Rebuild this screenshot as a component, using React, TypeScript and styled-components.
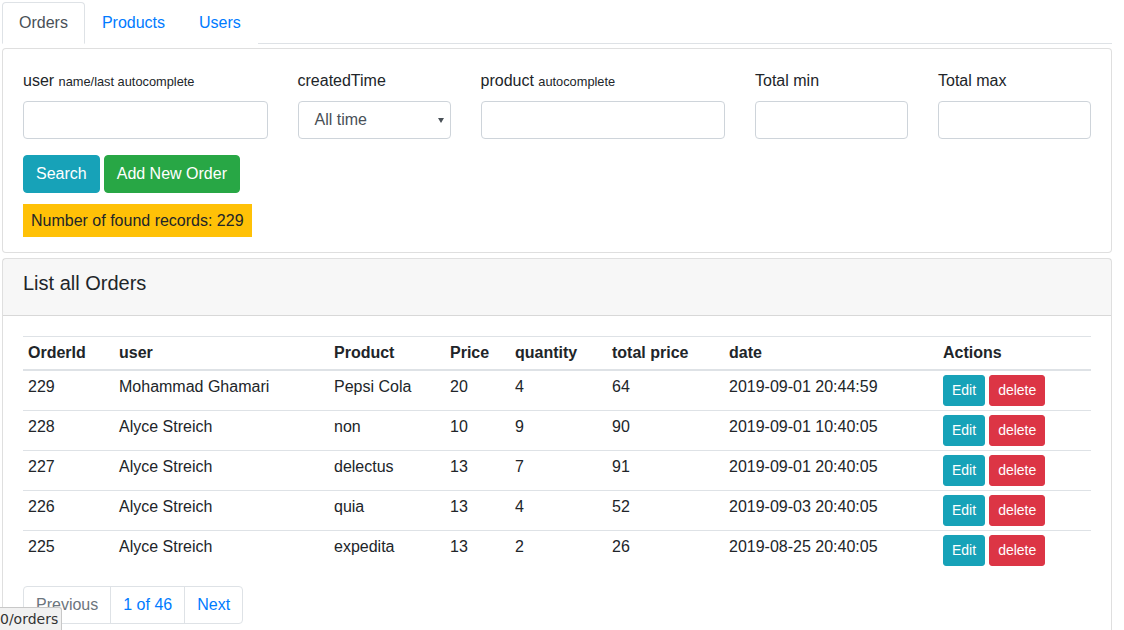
import styled, { createGlobalStyle } from "styled-components";

const GlobalStyle = createGlobalStyle`
  html, body {
    margin: 0;
    padding: 0;
    background: #fff;
  }
  body {
    font-family: "Liberation Sans", Arial, sans-serif;
    font-size: 16px;
    line-height: 1.5;
    color: #212529;
    overflow: hidden;
  }
  * {
    box-sizing: border-box;
  }
`;

const Page = styled.div`
  margin: 2px 12px 0 2px;
`;

const Tabs = styled.ul`
  display: flex;
  list-style: none;
  margin: 0;
  padding: 0;
  border-bottom: 1px solid #dee2e6;
`;

const Tab = styled.li<{ $active?: boolean }>`
  margin-bottom: -1px;
  padding: 8px 16px;
  border: 1px solid ${(p) => (p.$active ? "#dee2e6" : "transparent")};
  border-bottom-color: ${(p) => (p.$active ? "#fff" : "transparent")};
  border-radius: 4px 4px 0 0;
  background: #fff;
  color: ${(p) => (p.$active ? "#495057" : "#007bff")};
  cursor: pointer;
`;

const Card = styled.div<{ $gap: number }>`
  margin-top: ${(p) => p.$gap}px;
  border: 1px solid rgba(0, 0, 0, 0.125);
  border-radius: 4px;
  background: #fff;
`;

const CardBody = styled.div<{ $bottom?: number }>`
  padding: 20px 20px ${(p) => p.$bottom ?? 20}px;
`;

const CardHeader = styled.div`
  padding: 12px 20px;
  background: rgba(0, 0, 0, 0.03);
  border-bottom: 1px solid rgba(0, 0, 0, 0.125);
  h5 {
    margin: 0 0 8px;
    font-size: 20px;
    font-weight: 400;
    line-height: 1.2;
  }
`;

const Row = styled.div`
  display: flex;
  margin: 0 -15px;
`;

const Col = styled.div<{ $span: number }>`
  width: ${(p) => (p.$span / 12) * 100}%;
  padding: 0 15px;
  margin-bottom: 16px;
`;

const Label = styled.label`
  display: block;
  margin-bottom: 8px;
  small {
    font-size: 80%;
  }
`;

const Input = styled.input`
  display: block;
  width: 100%;
  height: 38px;
  padding: 6px 12px;
  font: inherit;
  color: #495057;
  border: 1px solid #ced4da;
  border-radius: 4px;
  outline: none;
`;

const SelectBox = styled.div`
  position: relative;
  &::after {
    content: "";
    position: absolute;
    right: 7px;
    top: 17px;
    border-left: 3.5px solid transparent;
    border-right: 3.5px solid transparent;
    border-top: 5px solid #495057;
    pointer-events: none;
  }
`;

const Select = styled.select`
  display: block;
  width: 100%;
  height: 38px;
  padding: 6px 12px;
  font: inherit;
  color: #495057;
  background: #fff;
  border: 1px solid #ced4da;
  border-radius: 4px;
  appearance: none;
  outline: none;
  text-indent: 4px;
`;

const Buttons = styled.div`
  display: flex;
  gap: 4px;
`;

const Button = styled.button<{ $variant: "info" | "success" | "danger"; $small?: boolean }>`
  font: inherit;
  font-size: ${(p) => (p.$small ? 14 : 16)}px;
  line-height: 1.5;
  padding: ${(p) => (p.$small ? "4px 8px" : "6px 12px")};
  border-radius: ${(p) => (p.$small ? 3 : 4)}px;
  color: #fff;
  cursor: pointer;
  background: ${(p) =>
    p.$variant === "info" ? "#17a2b8" : p.$variant === "success" ? "#28a745" : "#dc3545"};
  border: 1px solid
    ${(p) =>
      p.$variant === "info" ? "#17a2b8" : p.$variant === "success" ? "#28a745" : "#dc3545"};
`;

const Found = styled.div`
  display: inline-block;
  margin-top: 11px;
  padding: 4px 8px;
  background: #ffc107;
  line-height: 25px;
`;

const Table = styled.table`
  width: 100%;
  border-collapse: collapse;
  th,
  td {
    padding: 4px 5px;
    text-align: left;
    vertical-align: top;
    border-top: 1px solid #dee2e6;
  }
  th {
    font-weight: 700;
    vertical-align: bottom;
  }
  thead th {
    border-bottom: 2px solid #dee2e6;
  }
`;

const Actions = styled.div`
  display: flex;
  gap: 4px;
`;

const Pagination = styled.div`
  display: inline-flex;
  margin-top: 16px;
  border: 1px solid #dee2e6;
  border-radius: 4px;
`;

const PageItem = styled.span<{ $disabled?: boolean }>`
  padding: 6px 12px;
  color: ${(p) => (p.$disabled ? "#6c757d" : "#007bff")};
  & + & {
    border-left: 1px solid #dee2e6;
  }
`;

const StatusBubble = styled.div`
  position: fixed;
  left: 0;
  bottom: 0;
  height: 23px;
  padding: 1px 3px 0 0;
  background: #f1f1f1;
  border-top: 1px solid #c8c8c8;
  border-right: 1px solid #c8c8c8;
  border-top-right-radius: 3px;
  font-family: "DejaVu Sans", sans-serif;
  font-size: 14px;
  line-height: 20px;
  color: #333;
`;

const columns = [
  { title: "OrderId", width: 91 },
  { title: "user", width: 215 },
  { title: "Product", width: 116 },
  { title: "Price", width: 65 },
  { title: "quantity", width: 97 },
  { title: "total price", width: 117 },
  { title: "date", width: 214 },
  { title: "Actions", width: 153 },
];

const orders = [
  { id: 229, user: "Mohammad Ghamari", product: "Pepsi Cola", price: 20, qty: 4, total: 64, date: "2019-09-01 20:44:59" },
  { id: 228, user: "Alyce Streich", product: "non", price: 10, qty: 9, total: 90, date: "2019-09-01 10:40:05" },
  { id: 227, user: "Alyce Streich", product: "delectus", price: 13, qty: 7, total: 91, date: "2019-09-01 20:40:05" },
  { id: 226, user: "Alyce Streich", product: "quia", price: 13, qty: 4, total: 52, date: "2019-09-03 20:40:05" },
  { id: 225, user: "Alyce Streich", product: "expedita", price: 13, qty: 2, total: 26, date: "2019-08-25 20:40:05" },
];

export default function App() {
  return (
    <>
      <GlobalStyle />
      <Page>
        <Tabs>
          <Tab $active>Orders</Tab>
          <Tab>Products</Tab>
          <Tab>Users</Tab>
        </Tabs>

        <Card $gap={4}>
          <CardBody $bottom={15}>
            <Row>
              <Col $span={3}>
                <Label>
                  user <small>name/last autocomplete</small>
                </Label>
                <Input type="text" />
              </Col>
              <Col $span={2}>
                <Label>createdTime</Label>
                <SelectBox>
                  <Select defaultValue="all">
                    <option value="all">All time</option>
                    <option value="today">Today</option>
                    <option value="week">This week</option>
                  </Select>
                </SelectBox>
              </Col>
              <Col $span={3}>
                <Label>
                  product <small>autocomplete</small>
                </Label>
                <Input type="text" />
              </Col>
              <Col $span={2}>
                <Label>Total min</Label>
                <Input type="text" />
              </Col>
              <Col $span={2}>
                <Label>Total max</Label>
                <Input type="text" />
              </Col>
            </Row>
            <Buttons>
              <Button $variant="info">Search</Button>
              <Button $variant="success">Add New Order</Button>
            </Buttons>
            <Found>Number of found records: 229</Found>
          </CardBody>
        </Card>

        <Card $gap={5}>
          <CardHeader>
            <h5>List all Orders</h5>
          </CardHeader>
          <CardBody>
            <Table>
              <thead>
                <tr>
                  {columns.map((c) => (
                    <th key={c.title} style={{ width: c.width }}>
                      {c.title}
                    </th>
                  ))}
                </tr>
              </thead>
              <tbody>
                {orders.map((o) => (
                  <tr key={o.id}>
                    <td>{o.id}</td>
                    <td>{o.user}</td>
                    <td>{o.product}</td>
                    <td>{o.price}</td>
                    <td>{o.qty}</td>
                    <td>{o.total}</td>
                    <td>{o.date}</td>
                    <td>
                      <Actions>
                        <Button $variant="info" $small>
                          Edit
                        </Button>
                        <Button $variant="danger" $small>
                          delete
                        </Button>
                      </Actions>
                    </td>
                  </tr>
                ))}
              </tbody>
            </Table>
            <Pagination>
              <PageItem $disabled>Previous</PageItem>
              <PageItem>1 of 46</PageItem>
              <PageItem>Next</PageItem>
            </Pagination>
          </CardBody>
        </Card>
      </Page>
      <StatusBubble>0/orders</StatusBubble>
    </>
  );
}
